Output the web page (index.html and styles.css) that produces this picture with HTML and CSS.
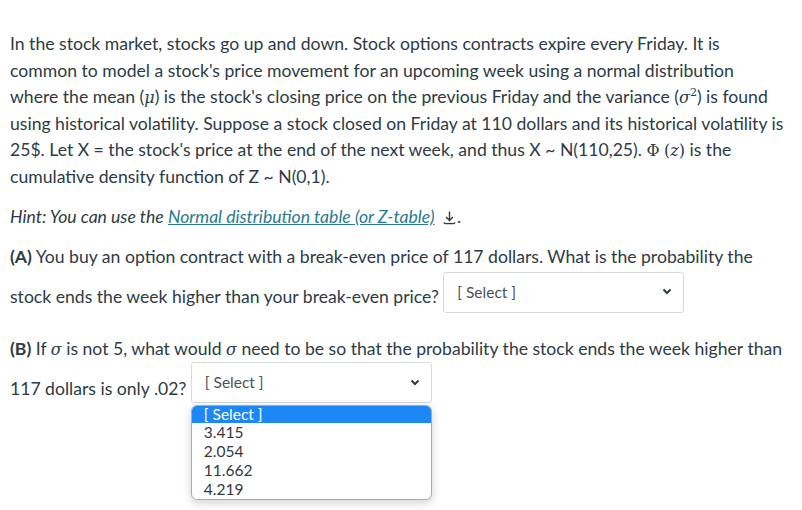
FILE: index.html
```html
<!DOCTYPE html>
<html>
<head>
<meta charset="utf-8">
<link rel="stylesheet" href="styles.css">
</head>
<body>
<div class="page">
  <p class="para intro">In the stock market, stocks go up and down. Stock options contracts expire every Friday. It is common to model a stock's price movement for an upcoming week using a normal distribution where the mean (<span class="m">μ</span>) is the stock's closing price on the previous Friday and the variance (<span class="m">σ<sup>2</sup></span>) is found using historical volatility. Suppose a stock closed on Friday at 110 dollars and its historical volatility is 25$. Let X = the stock's price at the end of the next week, and thus X ~ N(110,25). <span class="mr">Φ</span> <span class="mr">(</span><span class="m">z</span><span class="mr">)</span> is the cumulative density function of Z ~ N(0,1).</p>
  <p class="para hint"><em>Hint: You can use the <a class="link" href="#">Normal distribution table (or Z-table)</a></em> <svg class="dl" width="15" height="15" viewBox="0 0 14 14"><path d="M7 1.5V9.5M3.8 6.5L7 9.7L10.2 6.5" fill="none" stroke="#2d3b45" stroke-width="1.3"/><path d="M2 11.5Q2 12.8 3.3 12.8H10.7Q12 12.8 12 11.5" fill="none" stroke="#2d3b45" stroke-width="1.2"/></svg>.</p>
  <p class="para qa"><strong>(A)</strong> You buy an option contract with a break-even price of 117 dollars. What is the probability the stock ends the week higher than your break-even price? <span class="sel sel-a"><span class="sel-text">[ Select ]</span><svg class="chev" width="10" height="7" viewBox="0 0 10 7"><path d="M1.5 1.5L5 5L8.5 1.5" fill="none" stroke="#2d3b45" stroke-width="2"/></svg></span></p>
  <p class="para qb"><strong>(B)</strong> If <span class="m">σ</span> is not 5, what would <span class="m">σ</span> need to be so that the probability the stock ends the week higher than 117 dollars is only .02? <span class="sel-wrap"><span class="sel"><span class="sel-text">[ Select ]</span><svg class="chev" width="10" height="7" viewBox="0 0 10 7"><path d="M1.5 1.5L5 5L8.5 1.5" fill="none" stroke="#2d3b45" stroke-width="2"/></svg></span><span class="menu"><span class="opt active">[ Select ]</span><span class="opt">3.415</span><span class="opt">2.054</span><span class="opt">11.662</span><span class="opt">4.219</span></span></span></p>
</div>
</body>
</html>
```
FILE: styles.css
```css
html, body {
  margin: 0;
  padding: 0;
  background: #ffffff;
}
body {
  min-height: 510px;
}
.page {
  width: 775px;
  padding: 31px 10px 0 10px;
  font-family: Lato, "Open Sans", sans-serif;
  font-size: 17.6px;
  line-height: 26.6px;
  color: #2d3b45;
}
.para {
  margin: 0 0 12px 0;
}
.intro {
  margin-bottom: 13px;
}
.hint {
  margin-bottom: 14px;
}
.m {
  font-family: "DejaVu Serif", "Liberation Serif", serif;
  font-style: italic;
  font-size: 16px;
  line-height: 1;
}
.mr {
  font-family: "DejaVu Serif", "Liberation Serif", serif;
  font-size: 16px;
  line-height: 1;
}
.m sup {
  font-style: normal;
  font-size: 11px;
  line-height: 0;
  vertical-align: 7px;
}
.link {
  color: #2a7a91;
  text-decoration: underline;
}
.dl {
  vertical-align: -2px;
  margin-left: 3px;
}
strong {
  font-weight: 700;
}
.sel {
  display: inline-flex;
  align-items: center;
  justify-content: space-between;
  box-sizing: border-box;
  width: 241px;
  height: 41px;
  padding: 0 11px 1px 13px;
  border: 1px solid #d7dadd;
  border-radius: 3px;
  background: #ffffff;
  line-height: 20px;
}
.sel-a {
  vertical-align: 5px;
  margin: 1px 0 11px 0;
}
.sel-wrap {
  position: relative;
  display: inline-flex;
  vertical-align: 7px;
  margin: 0;
}
.sel-text {
  font-size: 15.5px;
  color: #4a5257;
}
.chev {
  flex: none;
}
.menu {
  position: absolute;
  left: 0;
  top: 43px;
  width: 241px;
  box-sizing: border-box;
  display: flex;
  flex-direction: column;
  border: 1px solid #a9acaf;
  border-radius: 6px;
  background: #ffffff;
  box-shadow: 0 3px 10px rgba(0, 0, 0, 0.18);
  overflow: hidden;
  z-index: 2;
}
.opt {
  display: block;
  font-size: 15.5px;
  line-height: 19px;
  padding: 0 12px;
  color: #33393d;
}
.opt.active {
  background: #1c87f5;
  color: #ffffff;
  line-height: 17px;
}
```
